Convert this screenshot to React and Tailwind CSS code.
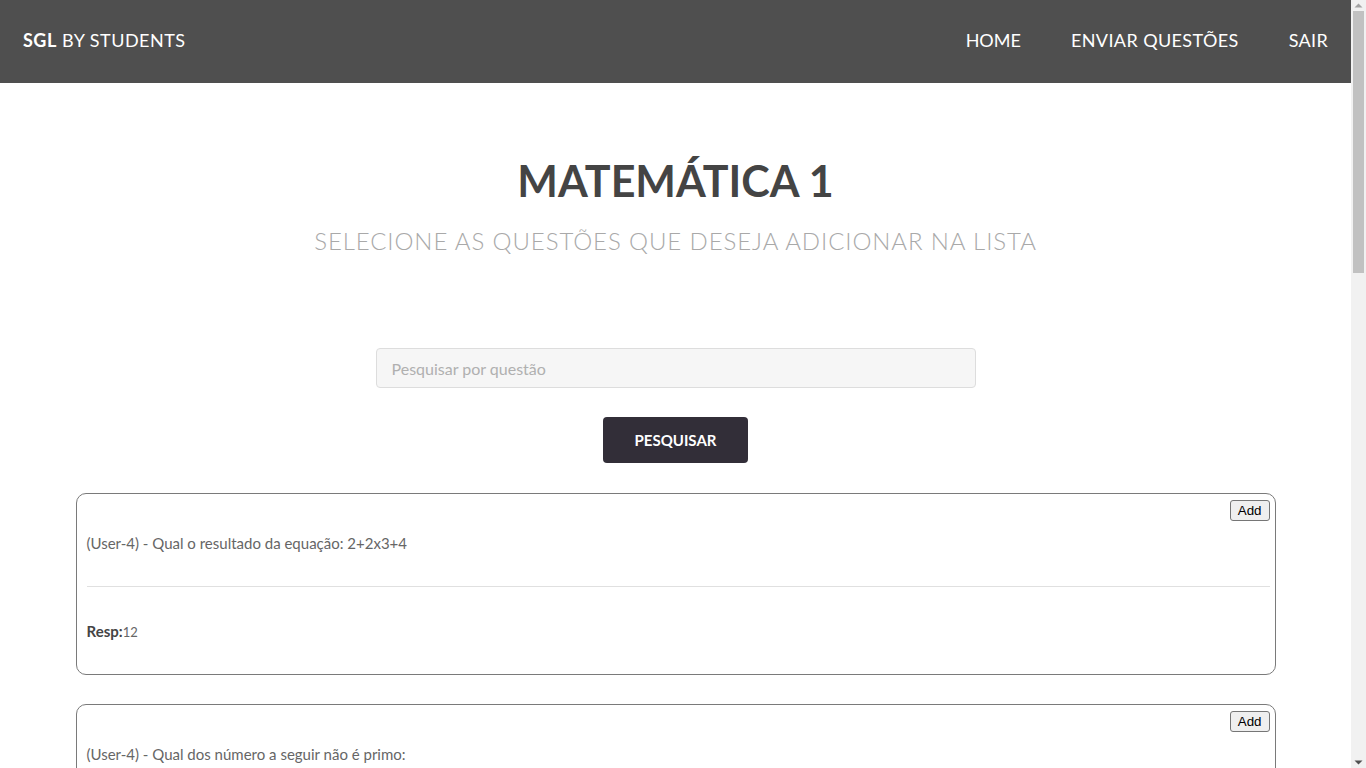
import React from "react";

const questions = [
  { q: "(User-4) - Qual o resultado da equação: 2+2x3+4", r: "12" },
  { q: "(User-4) - Qual dos número a seguir não é primo:", r: "4" },
  { q: "(User-4) - Quanto é 10/2:", r: "5" },
];

function Card({ q, r }) {
  return (
    <div className="border border-[#7a7a7a] rounded-[10px] pl-[10px] pr-[5px] pt-[6px] pb-[32px]">
      <div className="flex justify-end">
        <button className="h-[21px] px-[7px] text-[13.33px] leading-none text-black bg-[#efefef] border border-[#767676] rounded-[3px] font-['Liberation_Sans',Arial,sans-serif]">
          Add
        </button>
      </div>
      <p className="mt-[12px] text-[15px] leading-[20px] text-[#666]">{q}</p>
      <hr className="mt-[33px] border-0 border-t border-[#e0e0e0]" />
      <p className="mt-[34px] text-[15px] leading-[20px] text-[#666]">
        <b className="font-bold text-[#444]">Resp:</b>
        <span className="text-[13px]">{r}</span>
      </p>
    </div>
  );
}

function Scrollbar() {
  return (
    <div className="w-[15px] h-screen bg-[#f1f1f1] flex flex-col items-center shrink-0">
      <svg width="15" height="11" viewBox="0 0 15 11">
        <path d="M3.5 7.5 L7.5 3.5 L11.5 7.5 Z" fill="#a3a3a3" />
      </svg>
      <div className="w-[11px] h-[262px] bg-[#c1c1c1]" />
      <div className="flex-1" />
      <svg width="15" height="11" viewBox="0 0 15 11">
        <path d="M3.5 3.5 L11.5 3.5 L7.5 7.5 Z" fill="#505050" />
      </svg>
    </div>
  );
}

export default function App() {
  return (
    <div className="h-screen overflow-hidden flex bg-white font-['Lato','Open_Sans',sans-serif]">
      <div className="flex-1 min-w-0 overflow-hidden">
        <nav className="h-[83px] bg-[#4f4f4f] flex items-center justify-between px-[23px] text-white text-[18px]">
          <div className="tracking-[0.5px] -mt-[2px]">
            <span className="font-bold">SGL</span> BY STUDENTS
          </div>
          <div className="flex gap-[50px] tracking-[0.3px] -mt-[2px]">
            <a className="tracking-[0px]">HOME</a>
            <a className="tracking-[0.4px]">ENVIAR QUESTÕES</a>
            <a>SAIR</a>
          </div>
        </nav>

        <div className="flex flex-col items-center">
          <h1 className="mt-[70px] text-[43px] leading-[56px] font-bold text-[#444]">MATEMÁTICA 1</h1>
          <h2 className="mt-[16px] text-[24px] leading-[32px] font-light tracking-[0.9px] text-[#a9a9a9]">
            SELECIONE AS QUESTÕES QUE DESEJA ADICIONAR NA LISTA
          </h2>
          <input
            className="mt-[91px] w-[600px] h-[40px] bg-[#f6f6f6] border border-[#dddddd] rounded-[4px] px-[15px] text-[16px] placeholder:text-[#b0b0b0] outline-none"
            placeholder="Pesquisar por questão"
          />
          <button className="mt-[29px] w-[145px] h-[46px] bg-[#322e38] rounded-[4px] text-white text-[15px] font-bold">
            PESQUISAR
          </button>
        </div>

        <div className="w-[1200px] mx-auto mt-[30px] flex flex-col gap-[29px] pb-[40px]">
          {questions.map((x, i) => (
            <Card key={i} {...x} />
          ))}
        </div>
      </div>
      <Scrollbar />
    </div>
  );
}
